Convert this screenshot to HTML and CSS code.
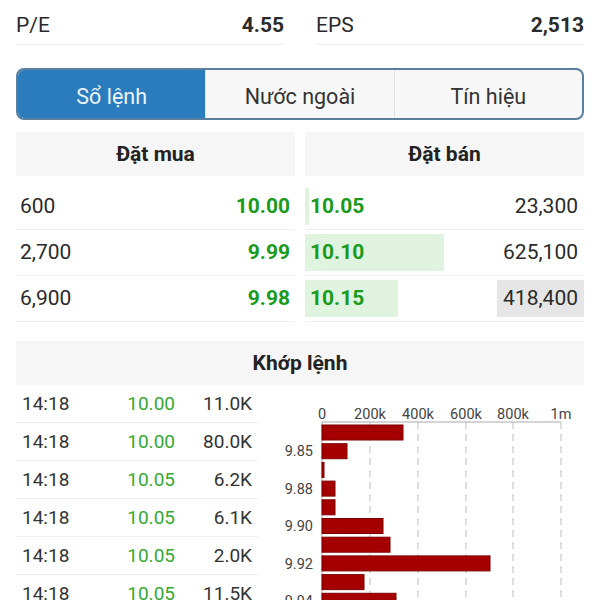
FILE: index.html
```html
<!DOCTYPE html>
<html lang="vi">
<head>
    <meta charset="UTF-8">
    <meta name="viewport" content="width=device-width, initial-scale=1.0">
    <title>Sổ lệnh</title>
    <link rel="stylesheet" href="styles.css">
</head>
<body>
    <div class="stats">
        <div class="stat"><span>P/E</span><b>4.55</b></div>
        <div class="stat"><span>EPS</span><b>2,513</b></div>
    </div>

    <div class="tabs">
        <div class="tab active">Sổ lệnh</div>
        <div class="tab">Nước ngoài</div>
        <div class="tab">Tín hiệu</div>
    </div>

    <div class="book">
        <div class="side buy">
            <div class="head">Đặt mua</div>
            <div class="row"><div class="cell"><span class="vol">600</span><span class="price">10.00</span></div></div>
            <div class="row"><div class="cell"><span class="vol">2,700</span><span class="price">9.99</span></div></div>
            <div class="row"><div class="cell"><span class="vol">6,900</span><span class="price">9.98</span></div></div>
        </div>
        <div class="side sell">
            <div class="head">Đặt bán</div>
            <div class="row"><div class="cell"><i class="bar" style="width: 4px"></i><span class="price">10.05</span><span class="vol">23,300</span></div></div>
            <div class="row"><div class="cell"><i class="bar" style="width: 139px"></i><span class="price">10.10</span><span class="vol">625,100</span></div></div>
            <div class="row"><div class="cell"><i class="bar" style="width: 93px"></i><span class="price">10.15</span><span class="vol changed">418,400</span></div></div>
        </div>
    </div>

    <div class="head match-head">Khớp lệnh</div>
    <div class="match">
        <div class="trades">
            <div class="trade"><span>14:18</span><span class="up">10.00</span><span>11.0K</span></div>
            <div class="trade"><span>14:18</span><span class="up">10.00</span><span>80.0K</span></div>
            <div class="trade"><span>14:18</span><span class="up">10.05</span><span>6.2K</span></div>
            <div class="trade"><span>14:18</span><span class="up">10.05</span><span>6.1K</span></div>
            <div class="trade"><span>14:18</span><span class="up">10.05</span><span>2.0K</span></div>
            <div class="trade"><span>14:18</span><span class="up">10.05</span><span>11.5K</span></div>
        </div>
        <svg class="chart" width="304" height="215" viewBox="0 0 304 215">
            <g class="grid">
                <line x1="90" y1="37" x2="90" y2="215"/>
                <line x1="138" y1="37" x2="138" y2="215"/>
                <line x1="186" y1="37" x2="186" y2="215"/>
                <line x1="233" y1="37" x2="233" y2="215"/>
                <line x1="281" y1="37" x2="281" y2="215"/>
            </g>
            <line class="axis" x1="42" y1="37" x2="281" y2="37"/>
            <line class="axis" x1="42" y1="37" x2="42" y2="215"/>
            <g class="xlabels">
                <text x="42" y="34">0</text>
                <text x="90" y="34">200k</text>
                <text x="138" y="34">400k</text>
                <text x="186" y="34">600k</text>
                <text x="233" y="34">800k</text>
                <text x="281" y="34">1m</text>
            </g>
            <g class="bars">
                <rect x="42" y="40" width="81" height="15"/>
                <rect x="42" y="58.7" width="25" height="15"/>
                <rect x="42" y="77.4" width="2" height="15"/>
                <rect x="42" y="96.1" width="13" height="15"/>
                <rect x="42" y="114.8" width="13" height="15"/>
                <rect x="42" y="133.5" width="61" height="15"/>
                <rect x="42" y="152.2" width="68" height="15"/>
                <rect x="42" y="170.9" width="168" height="15"/>
                <rect x="42" y="189.6" width="42" height="15"/>
                <rect x="42" y="208.3" width="74" height="15"/>
            </g>
            <g class="ylabels">
                <text x="33" y="71">9.85</text>
                <text x="33" y="108.5">9.88</text>
                <text x="33" y="146">9.90</text>
                <text x="33" y="183.5">9.92</text>
                <text x="33" y="221">9.94</text>
            </g>
        </svg>
    </div>
</body>
</html>
```

FILE: styles.css
```css
body {
    font-family: Roboto, "Noto Sans", sans-serif;
    margin: 0;
    padding: 0 16px;
    background: #fff;
    color: #2a2a2a;
}
.stats {
    display: flex;
    gap: 32px;
}
.stat {
    flex: 1;
    display: flex;
    justify-content: space-between;
    align-items: center;
    height: 45px;
    padding-top: 5px;
    box-sizing: border-box;
    border-bottom: 1px solid #eee;
    font-size: 21px;
}
.stat b {
    font-weight: 700;
}
.tabs {
    display: flex;
    margin-top: 23px;
    height: 52px;
    border: 2px solid #587f9d;
    border-radius: 8px;
    box-sizing: border-box;
    overflow: hidden;
    background: #f7f7f7;
}
.tab {
    flex: 1;
    display: flex;
    align-items: center;
    justify-content: center;
    padding-top: 4px;
    font-size: 21.5px;
    color: #333;
}
.tab + .tab {
    border-left: 1px solid #e2e2e2;
}
.tab.active {
    background: #2b7cbd;
    color: #eaf5ff;
}
.book {
    display: flex;
    gap: 10px;
    margin-top: 12px;
}
.side {
    flex: 1;
}
.head {
    height: 44px;
    display: flex;
    align-items: center;
    justify-content: center;
    background: #f6f6f6;
    font-size: 21px;
    font-weight: 700;
    color: #222;
}
.side .head {
    margin-bottom: 8px;
}
.row {
    padding: 4px 0 4px;
    border-bottom: 1px solid #f0f0f0;
}
.cell {
    position: relative;
    display: flex;
    justify-content: space-between;
    align-items: stretch;
    height: 37px;
    line-height: 37px;
    font-size: 21px;
}
.bar {
    position: absolute;
    left: 0;
    top: 0;
    bottom: 0;
    background: #dff3df;
}
.price {
    position: relative;
    font-weight: 700;
    color: #1c9a1c;
}
.vol {
    position: relative;
}
.buy .vol {
    padding-left: 4px;
}
.buy .price {
    padding-right: 5px;
}
.sell .price {
    padding-left: 5px;
}
.sell .vol {
    padding: 0 6px;
}
.vol.changed {
    background: #e6e6e6;
}
.match-head {
    margin-top: 19px;
}
.match {
    display: flex;
    align-items: flex-start;
    gap: 22px;
}
.trades {
    width: 242px;
    flex-shrink: 0;
}
.trade {
    display: grid;
    grid-template-columns: 1fr 70px 77px;
    height: 37px;
    align-items: center;
    padding: 0 6px;
    border-bottom: 1px solid #efefef;
    font-size: 19px;
    color: #333;
}
.trade span + span {
    text-align: right;
}
.trade .up {
    color: #35a835;
}
.chart {
    display: block;
    flex-shrink: 0;
}
.grid line {
    stroke: #bdbdbd;
    stroke-width: 1;
    stroke-dasharray: 7 5;
}
.axis {
    stroke: #aaa;
    stroke-width: 1;
}
.chart text {
    font-family: Roboto, "Noto Sans", sans-serif;
    font-size: 14.5px;
    fill: #444;
}
.xlabels text {
    text-anchor: middle;
}
.ylabels text {
    text-anchor: end;
}
.bars rect {
    fill: #a50000;
    stroke: #7d0000;
    stroke-width: 1;
}
```
